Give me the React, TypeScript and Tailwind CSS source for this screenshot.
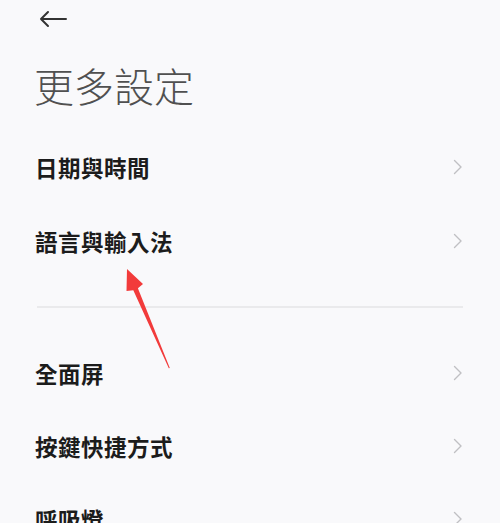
import React from "react";

const font = { fontFamily: '"Noto Sans CJK TC", "Noto Sans", sans-serif' };

function Chevron() {
  return (
    <svg width="10" height="16" viewBox="0 0 10 16" fill="none">
      <polyline points="1.5,1.5 8,8 1.5,14.5" stroke="#c0c0c3" strokeWidth="1.4" strokeLinecap="round" strokeLinejoin="round" />
    </svg>
  );
}

function Row({ label, h }: { label: string; h: string }) {
  return (
    <div className={`flex items-center justify-between pl-[35px] pr-[37px] ${h}`}>
      <span className="text-[22.5px] leading-[24px] font-semibold text-[#1c1c1c] tracking-[0.5px]">{label}</span>
      <Chevron />
    </div>
  );
}

export default function App() {
  return (
    <div className="relative w-[500px] h-[523px] overflow-hidden bg-[#f9f9fb]" style={font}>
      <div className="h-[38px] flex items-center pl-[38px]">
        <svg width="30" height="18" viewBox="0 0 30 18" fill="none">
          <path d="M28 9H3M10 2L3 9L10 16" stroke="#333" strokeWidth="2" strokeLinecap="round" strokeLinejoin="round" />
        </svg>
      </div>
      <div className="pt-[27px] pb-[25px] pl-[34px]">
        <div className="text-[40px] leading-[40px] font-light text-[#505050]">更多設定</div>
      </div>
      <Row label="日期與時間" h="h-[74px]" />
      <Row label="語言與輸入法" h="h-[74px]" />
      <div className="h-[58px] flex flex-col pt-[28px] px-[37px]">
        <div className="h-[1.5px] bg-[#eaeaec]" />
      </div>
      <Row label="全面屏" h="h-[73px]" />
      <Row label="按鍵快捷方式" h="h-[73px]" />
      <Row label="呼吸燈" h="h-[73px]" />
      <svg className="absolute left-[110px] top-[260px]" width="70" height="115" viewBox="0 0 70 115">
        <polygon points="17,9 33,24 27.9,28.2 59.8,108 58.8,108.3 23.3,30.2 16.5,31" fill="#f23b3b" />
      </svg>
    </div>
  );
}
